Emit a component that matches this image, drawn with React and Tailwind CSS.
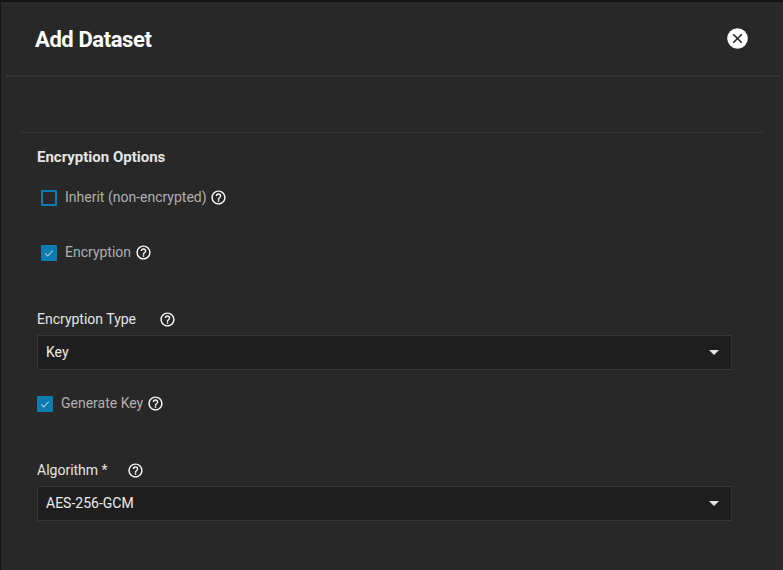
import { MdHelpOutline } from "react-icons/md";

function Help({ className = "" }) {
  return <MdHelpOutline className={`size-[17px] shrink-0 text-white ${className}`} />;
}

function Checkbox({ checked }) {
  return checked ? (
    <span className="flex size-4 shrink-0 items-center justify-center rounded-[1px] bg-[#0a7cb0]">
      <svg viewBox="0 0 16 16" className="size-4" fill="none" stroke="#b4cbd6" strokeWidth="1.1">
        <path d="M4.2 8.3 6.8 10.9 11.8 5.5" />
      </svg>
    </span>
  ) : (
    <span className="size-4 shrink-0 rounded-[1px] border-2 border-[#0a7cb0]" />
  );
}

function CheckRow({ label, checked, className = "" }) {
  return (
    <div className={`flex h-4 items-center ${className}`}>
      <Checkbox checked={checked} />
      <span className="mb-0.5 ml-2 text-sm leading-4 text-[#b0b0b0]">{label}</span>
      <Help className="mb-px ml-[3.7px]" />
    </div>
  );
}

function Select({ label, value, helpGap }) {
  return (
    <div>
      <div className="flex h-6 items-start">
        <span className="text-sm leading-4 text-[#e4e4e4]">{label}</span>
        <Help className={helpGap} />
      </div>
      <div className="flex h-[35px] items-center justify-between border border-[#363636] bg-[#1e1e1e] pr-3 pl-2">
        <span className="mb-px text-sm leading-4 text-[#ececec]">{value}</span>
        <svg viewBox="0 0 10 5" className="h-[5px] w-[10px]" fill="#e6e6e6">
          <path d="M0 0h10L5 5z" />
        </svg>
      </div>
    </div>
  );
}

export default function App() {
  return (
    <div className="h-[570px] w-[783px] overflow-hidden border-t-2 border-l border-[#131313] bg-[#282828] font-['Roboto',sans-serif]">
      <header className="mr-1 ml-[5px] flex h-[75px] items-center justify-between border-b-2 border-[#343434] pr-[31.5px] pl-[29px]">
        <h1 className="mt-0.5 text-[22px] leading-7 font-bold tracking-[-0.4px] text-white">Add Dataset</h1>
        <svg viewBox="0 0 21 21" className="size-[21px]">
          <circle cx="10.5" cy="10.5" r="10.3" fill="#fff" />
          <path d="m6.2 6.2 8.6 8.6m0-8.6-8.6 8.6" stroke="#252525" strokeWidth="1.6" />
        </svg>
      </header>
      <div className="mt-[55px] mr-[19px] ml-5 border-t border-[#363636]" />
      <main className="pt-[15px] pr-[51px] pl-9">
        <h2 className="text-[15px] leading-[18px] font-bold text-[#e4e4e4]">Encryption Options</h2>
        <CheckRow label="Inherit (non-encrypted)" className="mt-6 ml-1" />
        <CheckRow label="Encryption" checked className="mt-[39px] ml-1" />
        <div className="mt-[50px]">
          <Select label="Encryption Type" value="Key" helpGap="ml-[23px]" />
        </div>
        <CheckRow label="Generate Key" checked className="mt-[26px]" />
        <div className="mt-[50px]">
          <Select label="Algorithm *" value="AES-256-GCM" helpGap="ml-[19px]" />
        </div>
      </main>
    </div>
  );
}
